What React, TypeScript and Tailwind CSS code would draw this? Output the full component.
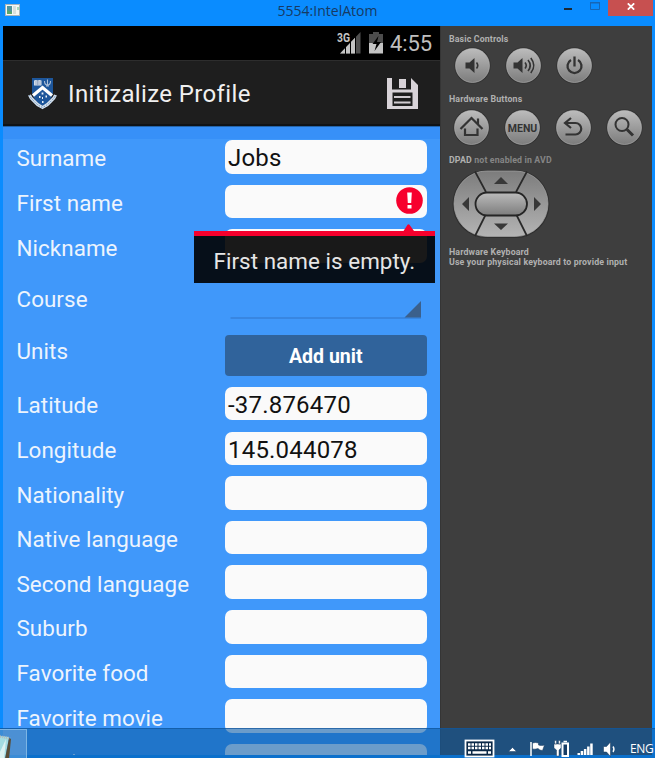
import React from "react";

type Row = {
  label: string;
  value?: string;
  kind?: "error" | "spinner" | "button";
};

const rows: Row[] = [
  { label: "Surname", value: "Jobs" },
  { label: "First name", kind: "error" },
  { label: "Nickname" },
  { label: "Course", kind: "spinner" },
  { label: "Units", kind: "button" },
  { label: "Latitude", value: "-37.876470" },
  { label: "Longitude", value: "145.044078" },
  { label: "Nationality" },
  { label: "Native language" },
  { label: "Second language" },
  { label: "Suburb" },
  { label: "Favorite food" },
  { label: "Favorite movie" },
  { label: "" },
];

function TitleBar() {
  return (
    <div className="relative flex h-[26px] shrink-0 items-start justify-between">
      <svg className="ml-[5px] mt-[4px]" width="15" height="12" viewBox="0 0 15 12">
        <rect width="15" height="12" fill="#a9b4ba" />
        <rect x="1" y="1" width="13" height="10" fill="#f4f6f4" />
        <rect x="2" y="2" width="5" height="8" fill="#4f94a0" />
        <path d="M2 10V6l5 2v2z" fill="#59a66c" />
        <rect x="8" y="2" width="3" height="8" fill="#d9dfdd" />
        <rect x="12" y="3" width="2" height="3" fill="#a5d9ba" />
      </svg>
      <div className="absolute inset-x-0 top-0 flex justify-center">
        <span className="whitespace-nowrap font-['Open_Sans',sans-serif] text-[14px] leading-[21px] text-[#173a63]">
          5554:IntelAtom
        </span>
      </div>
      <div className="mr-[2px] flex">
        <svg width="44" height="16" viewBox="0 0 44 16">
          <rect x="0" y="8" width="8" height="2" fill="#1b2733" />
          <path d="M26.500 3v6.500h9V3z" fill="none" stroke="#1766b5" />
          <path d="M26 2.500h10" stroke="#1766b5" />
        </svg>
        <div className="flex h-4 w-[45px] items-start justify-center bg-[#c75050] pt-[3px]">
          <svg width="8" height="7" viewBox="0 0 8 7">
            <path d="M.8.3l6.400 6.400M7.200.3L.8 6.700" stroke="#fff" strokeWidth="1.700" />
          </svg>
        </div>
      </div>
    </div>
  );
}

function StatusBar() {
  return (
    <div className="flex h-[34px] items-start justify-end bg-black pr-[8px]">
      <svg className="mt-[5px]" width="49" height="24" viewBox="0 0 49 24">
        <path d="M3 22.500L23.500 1v21.500z" fill="#505050" />
        <path d="M3 22.500L18 6.700v15.800z" fill="#c4c4c4" />
        <path d="M8.500 15v8M13.500 10v13M18.500 4v19" stroke="#000" strokeWidth="1" />
        <text x="0" y="10.500" fill="#c4c4c4" stroke="#000" strokeWidth="2" paintOrder="stroke" fontFamily="Roboto" fontWeight="700" fontSize="12" textLength="13" lengthAdjust="spacingAndGlyphs">3G</text>
        <path d="M32 3h4V1h6v2h4v9H32z" fill="#4d4d4d" />
        <path d="M32 12h14v10.500H32z" fill="#c4c4c4" />
        <path d="M41.500 5l-6 8h4l-2 7 6.500-9h-4z" fill="#000" />
      </svg>
      <span className="ml-[4px] font-[Roboto,sans-serif] text-[22px] leading-[36px] tracking-[-0.1px] text-[#bfbfbf]">4:55</span>
    </div>
  );
}

function Crest() {
  return (
    <svg className="ml-[25px] mt-[1px] shrink-0" width="29" height="33" viewBox="0 0 29 33">
      <path d="M4 1h21v15q-2 9-10.500 13Q6 25 4 16z" fill="#1d569b" />
      <path d="M6 3.500q2-1 3.500 0 2-1 4 0v5H6z" fill="#d5deea" />
      <path d="M7 5h6M7 7h6M9.700 3v5" stroke="#7892b5" strokeWidth=".6" />
      <path d="M16.500 4q0 4 3 4t3-4M19.500 2.500v6.500M18 9h3" fill="none" stroke="#aabdd6" strokeWidth="1.100" />
      <path d="M5 18.500L14.500 10.500 24 18.500" fill="none" stroke="#fff" strokeWidth="3.200" />
      <path d="M1.500 18q1 3 4 5.500 3 4 9 7 6-3 9-7 3-2.500 4-5.500" fill="none" stroke="#d6e2ef" strokeWidth="3" />
      <path d="M1.500 18q1 3 4 5.500 3 4 9 7 6-3 9-7 3-2.500 4-5.500" fill="none" stroke="#547fae" strokeWidth="1" strokeDasharray="1.300 1.500" />
      <path d="M14.500 15.500v2M11 20h1.500M17.500 19.500H19M14 21h1M14 25h1.500" stroke="#e9f0f8" strokeWidth="1.800" />
    </svg>
  );
}

function ActionBar() {
  return (
    <div className="flex h-[66px] items-center border-b-2 border-t border-b-[#101316] border-t-[#2d2d2d] bg-[#1e1e1e]">
      <Crest />
      <h1 className="ml-[11px] mt-[2px] whitespace-nowrap font-[Roboto,sans-serif] text-[24px] leading-8 tracking-[0.370px] text-[#f0f0f0]">
        Initizalize Profile
      </h1>
      <svg className="ml-auto mr-[22px] mt-[2px]" width="31" height="31" viewBox="0 0 31 31">
        <path fill="#d8d3d8" fillRule="evenodd" d="M0 0h5v11.500h19V0l7 7v24H0zM5.500 14.500v13.500h20V14.500z" />
        <path fill="#d8d3d8" d="M12 1h7v9h-7z" />
        <path d="M7 19h16.500M7 24.500h16.500" stroke="#d0cbd0" strokeWidth="2" />
      </svg>
    </div>
  );
}

function ErrorBubble() {
  return (
    <div className="absolute right-[-8px] top-[40px] z-10 w-[241px]">
      <svg className="absolute right-[18.500px] top-[-1px]" width="15" height="9" viewBox="0 0 15 9">
        <path d="M0 9q1.500-.5 2.500-2L6.500.7q1-1 2 0L13 7Q14 8.500 15 9z" fill="#f7002d" />
      </svg>
      <div className="mt-[6.500px] h-[52px] border-t-[5px] border-[#f7002d] bg-black/90 pl-[20px]">
        <span className="whitespace-nowrap font-[Roboto,sans-serif] text-[22.400px] leading-[50px] tracking-[0.050px] text-[#e6e6e6]">
          First name is empty.
        </span>
      </div>
    </div>
  );
}

function FormRow({ row }: { row: Row }) {
  const label = "w-[208.500px] shrink-0 whitespace-nowrap font-[Roboto,sans-serif] text-[22.400px] leading-[30px] tracking-[0.060px] text-[#edf4fd] ";
  if (row.kind === "spinner") {
    return (
      <div className="flex h-[61px] shrink-0">
        <span className={label + "pt-[10px]"}>{row.label}</span>
        <svg className="mt-[26px]" width="202" height="20" viewBox="0 0 202 20">
          <path d="M5.500 18h190.500" stroke="#3681d8" strokeWidth="1.500" />
          <path d="M179.500 17.500L196 1v16.500z" fill="#3b608c" />
        </svg>
      </div>
    );
  }
  if (row.kind === "button") {
    return (
      <div className="flex h-[52px] shrink-0">
        <span className={label + "pt-[1px]"}>{row.label}</span>
        <button className="h-[41px] w-[201.500px] rounded-[4px] bg-[#30639b] pt-[2px] font-[Roboto,sans-serif] text-[19.500px] font-bold text-white">
          Add unit
        </button>
      </div>
    );
  }
  return (
    <div className="flex h-[44.650px] shrink-0">
      <span className={label + "pt-[3.350px]"}>
        {row.label || <span className="ml-[56px] mt-[7px] block h-px w-[2px] bg-[#edf4fd]" />}
      </span>
      <div className="relative h-[33.500px] w-[201.500px] rounded-[7px] bg-[#fafafa] pl-[3px]">
        <span className="whitespace-nowrap font-[Roboto,sans-serif] text-[24px] leading-[36px] tracking-[0.200px] text-[#111]">{row.value}</span>
        {row.kind === "error" && (
          <>
            <svg className="absolute right-[3.500px] top-[2.500px]" width="27" height="27" viewBox="0 0 27 27">
              <circle cx="13.500" cy="13.500" r="13.300" fill="#f7002d" />
              <path d="M11.200 5.500h4.600l-.6 10.500h-3.400zM11.500 18h4v3.500h-4z" fill="#fff" />
            </svg>
            <ErrorBubble />
          </>
        )}
      </div>
    </div>
  );
}

function RoundButton({ children }: { children: React.ReactNode }) {
  return (
    <svg width="37" height="37" viewBox="-18.500 -18.500 37 37">
      <circle r="18.300" fill="#343434" />
      <circle r="17" fill="url(#metal)" stroke="#c4c4c4" strokeWidth=".5" />
      {children}
    </svg>
  );
}

function Dpad() {
  return (
    <svg width="98" height="70" viewBox="0 0 98 70">
      <rect x=".5" y="1" width="97" height="68" rx="34" fill="#303030" />
      <rect x="2" y="2" width="94" height="65.500" rx="32.700" fill="url(#pad)" stroke="#a6a6a6" strokeWidth=".7" />
      <path d="M23 2.500L34 23M75 2.500L64 23M23 67L34 45M75 67L64 45" stroke="#292929" strokeWidth="1.700" />
      <rect x="23.500" y="23.500" width="51.500" height="23" rx="11.500" fill="url(#metal)" stroke="#252525" strokeWidth="1.800" />
      <path d="M42 15h14l-7-7z" fill="#383838" />
      <path d="M42 54.500h14l-7 6.500zM17 28v14l-7-7zM82 28v14l7-7z" fill="#383838" />
    </svg>
  );
}

function EmulatorControls() {
  const heading = "whitespace-nowrap font-[Roboto,sans-serif] text-[8.800px] font-bold leading-[10px] tracking-[0.140px] text-[#b0b0b0]";
  return (
    <aside className="w-[212px] shrink-0 border-l border-[#353535] bg-[#3e3e3e] pl-[8px] pt-[8px]">
      <svg width="0" height="0" className="absolute">
        <defs>
          <linearGradient id="metal" x1="0" y1="0" x2="0" y2="1">
            <stop offset="0" stopColor="#bcbcbc" />
            <stop offset="1" stopColor="#7c7c7c" />
          </linearGradient>
          <linearGradient id="pad" x1="0" y1="0" x2="0" y2="1">
            <stop offset="0" stopColor="#7c7c7c" />
            <stop offset="1" stopColor="#b4b4b4" />
          </linearGradient>
        </defs>
      </svg>
      <div className={heading}>Basic Controls</div>
      <div className="ml-[5px] mt-[3px] flex gap-[14px]">
        <RoundButton>
          <path d="M-7-3h4l5-4.500v15L-3 3h-4z" fill="#333" />
          <path d="M4-3q2.500 3 0 6" fill="none" stroke="#333" strokeWidth="1.600" />
        </RoundButton>
        <RoundButton>
          <path d="M-10-3h4l5-4.500v15L-6 3h-4z" fill="#333" />
          <path d="M1.500-3q2.500 3 0 6M4.500-5.500q4.500 5.500 0 11M7.300-7.500q6 7.500 0 15" fill="none" stroke="#333" strokeWidth="1.600" />
        </RoundButton>
        <RoundButton>
          <path d="M-3.500-5.500a7 7 0 1 0 7 0M0-9V1" fill="none" stroke="#333" strokeWidth="2.300" />
        </RoundButton>
      </div>
      <div className={heading + " mt-[10px]"}>Hardware Buttons</div>
      <div className="ml-[4px] mt-[5px] flex gap-[14px]">
        <RoundButton>
          <path d="M-11 1.500L0-9.500 11 1.500M6.500-9v6M-6.500 1v6.500H6V1" fill="none" stroke="#333" strokeWidth="2.200" />
        </RoundButton>
        <RoundButton>
          <text y="4.500" textAnchor="middle" fontFamily="Roboto" fontWeight="700" fontSize="10.500" fill="#333">MENU</text>
        </RoundButton>
        <RoundButton>
          <path d="M-7-4.500H2a5.700 5.700 0 0 1 0 11.500H-8M-2.500-9.500l-6 5L-2.500.5" fill="none" stroke="#333" strokeWidth="2.200" />
        </RoundButton>
        <RoundButton>
          <circle cx="-2.500" cy="-3" r="6.500" fill="none" stroke="#333" strokeWidth="2" />
          <path d="M2.500 2l6 6" stroke="#333" strokeWidth="3" />
        </RoundButton>
      </div>
      <div className={heading + " mt-[9px]"}>
        DPAD <span className="text-[#858585]">not enabled in AVD</span>
      </div>
      <div className="ml-[3px] mt-[4px]"><Dpad /></div>
      <div className={heading + " mt-[8px]"}>
        Hardware Keyboard
        <br />
        Use your physical keyboard to provide input
      </div>
    </aside>
  );
}

function Taskbar() {
  return (
    <div className="absolute inset-x-0 bottom-0 z-20 flex h-[30px] border-t border-[#10559c]/70 bg-[#0b5eaa]/60">
      <div className="h-full w-[27px] overflow-hidden border-r border-t border-[#7db5e4] bg-white/20">
        <svg width="14" height="29" viewBox="0 0 14 29">
          <path d="M0 6l9 1-4 22H0z" fill="#a4dce2" />
          <path d="M0 22L6 9 4 29H0z" fill="#ddf2f2" />
          <path d="M9 8l2 1-2 20H5z" fill="#594c35" />
          <path d="M0 6.500l10 2" stroke="#b3bbbb" strokeWidth="2.500" strokeDasharray="1 1" />
        </svg>
      </div>
      <svg className="ml-auto" width="154" height="29" viewBox="0 0 154 29">
        <rect x="1.500" y="11.500" width="28" height="16" fill="#0b2948" stroke="#fff" strokeWidth="1.800" />
        <path d="M4 15.500h23M4 19h23" stroke="#fff" strokeWidth="2.500" strokeDasharray="2.500 1" />
        <path d="M4 23.500h3m1.500 0h14m1.500 0h3" stroke="#fff" strokeWidth="2.500" />
        <path d="M44.500 22.500l4-4 4 4z" fill="#fff" stroke="#143b64" strokeWidth=".5" />
        <path d="M67 13v14" stroke="#fff" strokeWidth="1.500" />
        <path d="M68.500 14q3-1 6 0v2q3 1 6 0l-2 5.500q-3 0-4.500-2-3 1-5.500 .5z" fill="#fff" stroke="#16365a" strokeWidth=".5" />
        <g stroke="#112f50" strokeWidth=".4">
          <path d="M90 15h7v4l-2 2v6h-2.500v-6l-2.500-2zM90.700 11.500h1.800V15h-1.800zM94.500 11.500h1.800V15h-1.800z" fill="#fff" />
        </g>
        <rect x="98.500" y="14.500" width="5.500" height="12.500" fill="#183e66" stroke="#fff" strokeWidth="2" />
        <path d="M99.500 12.500h3.500" stroke="#fff" strokeWidth="1.500" />
        <path d="M113.500 24h2.500v2h-2.500zM116.700 22h2.500v4h-2.500zM119.900 20h2.500v6h-2.500zM123.100 17.500h2.500v8.500h-2.500zM126.200 14.500h2.500v11.500h-2.500z" fill="#fff" />
        <path d="M139.500 17.500h3l4-4.500v14.500l-4-4.500h-3z" fill="#fff" stroke="#0e3155" strokeWidth=".5" />
        <path d="M149 17.500q2 2.800 0 5.500" fill="none" stroke="#fff" strokeWidth="1.300" />
      </svg>
      <span className="ml-[12px] mr-[1px] mt-[12px] w-[24px] whitespace-nowrap font-['Open_Sans',sans-serif] text-[12px] leading-4 tracking-[-0.4px] text-white">
        ENG
      </span>
    </div>
  );
}

export default function App() {
  return (
    <div className="relative flex h-[758px] w-[655px] flex-col overflow-hidden bg-[#0a8cff]">
      <TitleBar />
      <div className="mx-[3px] mb-[3px] flex min-h-0 flex-1 overflow-hidden">
        <main className="flex w-[437px] shrink-0 flex-col overflow-hidden bg-[#4098fa]">
          <StatusBar />
          <ActionBar />
          <div className="flex min-h-0 flex-1 flex-col overflow-hidden pl-[13.500px]">
            <div className="-ml-[13.500px] h-[13px] shrink-0 border-t border-[#2564a8] bg-[#3790f8]" />
            <div className="flex flex-col pt-[1px]">
              {rows.map((row, i) => (
                <FormRow key={i} row={row} />
              ))}
            </div>
          </div>
        </main>
        <EmulatorControls />
      </div>
      <Taskbar />
    </div>
  );
}
